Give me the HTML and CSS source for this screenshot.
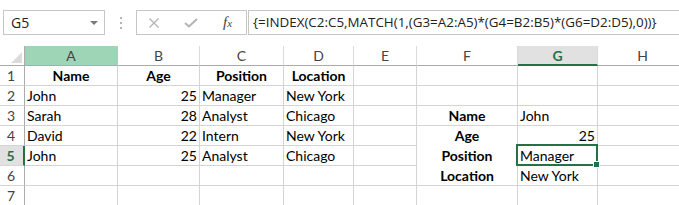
FILE: index.html
```html
<!DOCTYPE html>
<html lang="en">
    <head>
        <meta charset="UTF-8">
        <title>Sheet</title>
        <link rel="stylesheet" href="styles.css">
    </head>
    <body>
        <div class="toolbar">
            <div class="namebox">
                <span>G5</span>
                <span class="caret"></span>
            </div>
            <div class="grip"><i></i><i></i><i></i></div>
            <div class="fxbuttons">
                <svg class="icon-x" width="10" height="10" viewBox="0 0 10 10">
                    <path d="M0.5 0.5 L9.5 9.5 M9.5 0.5 L0.5 9.5" stroke="#b3b3b3" stroke-width="1.3" fill="none"/>
                </svg>
                <svg class="icon-ok" width="14" height="10" viewBox="0 0 14 10">
                    <path d="M1 5 L5 8.5 L13 1" stroke="#b3b3b3" stroke-width="2" fill="none"/>
                </svg>
                <span class="fx">f<small>x</small></span>
            </div>
            <div class="formula">{=INDEX(C2:C5,MATCH(1,(G3=A2:A5)*(G4=B2:B5)*(G6=D2:D5),0))}</div>
        </div>

        <div class="sheet">
            <div class="row head">
                <div class="rh corner"><span class="tri"></span></div>
                <div class="ch ca hl-a">A</div>
                <div class="ch cb">B</div>
                <div class="ch cc">C</div>
                <div class="ch cd">D</div>
                <div class="ch ce">E</div>
                <div class="ch cf">F</div>
                <div class="ch cg hl-g">G</div>
                <div class="ch chh">H</div>
            </div>
            <div class="row">
                <div class="rh">1</div>
                <div class="c ca b center">Name</div>
                <div class="c cb b center">Age</div>
                <div class="c cc b center">Position</div>
                <div class="c cd b center">Location</div>
                <div class="c ce"></div>
                <div class="c cf"></div>
                <div class="c cg"></div>
                <div class="c chh"></div>
            </div>
            <div class="row">
                <div class="rh">2</div>
                <div class="c ca">John</div>
                <div class="c cb num">25</div>
                <div class="c cc">Manager</div>
                <div class="c cd">New York</div>
                <div class="c ce"></div>
                <div class="c cf"></div>
                <div class="c cg"></div>
                <div class="c chh"></div>
            </div>
            <div class="row">
                <div class="rh">3</div>
                <div class="c ca">Sarah</div>
                <div class="c cb num">28</div>
                <div class="c cc">Analyst</div>
                <div class="c cd">Chicago</div>
                <div class="c ce"></div>
                <div class="c cf b center">Name</div>
                <div class="c cg">John</div>
                <div class="c chh"></div>
            </div>
            <div class="row">
                <div class="rh">4</div>
                <div class="c ca">David</div>
                <div class="c cb num">22</div>
                <div class="c cc">Intern</div>
                <div class="c cd">New York</div>
                <div class="c ce"></div>
                <div class="c cf b center nob">Age</div>
                <div class="c cg num">25</div>
                <div class="c chh"></div>
            </div>
            <div class="row">
                <div class="rh hl-r">5</div>
                <div class="c ca">John</div>
                <div class="c cb num">25</div>
                <div class="c cc">Analyst</div>
                <div class="c cd">Chicago</div>
                <div class="c ce"></div>
                <div class="c cf b center nob">Position</div>
                <div class="c cg active">Manager<span class="sel"><span class="handle"></span></span></div>
                <div class="c chh"></div>
            </div>
            <div class="row">
                <div class="rh">6</div>
                <div class="c ca"></div>
                <div class="c cb"></div>
                <div class="c cc"></div>
                <div class="c cd"></div>
                <div class="c ce"></div>
                <div class="c cf b center">Location</div>
                <div class="c cg">New York</div>
                <div class="c chh"></div>
            </div>
            <div class="row">
                <div class="rh">7</div>
                <div class="c ca"></div>
                <div class="c cb"></div>
                <div class="c cc"></div>
                <div class="c cd"></div>
                <div class="c ce"></div>
                <div class="c cf"></div>
                <div class="c cg"></div>
                <div class="c chh"></div>
            </div>
        </div>
    </body>
</html>
```

FILE: styles.css
```css
body {
    margin: 0;
    background: #fff;
    width: 679px;
    height: 205px;
    overflow: hidden;
}

/* formula bar */
.toolbar {
    display: flex;
    align-items: flex-start;
    height: 46px;
    padding-top: 10px;
    box-sizing: border-box;
    font-family: "Open Sans", "Noto Sans", sans-serif;
    color: #222;
}

.namebox {
    width: 102px;
    height: 25px;
    margin-left: 3px;
    box-sizing: border-box;
    border: 1px solid #c6c6c6;
    display: flex;
    align-items: center;
    justify-content: space-between;
    padding: 0 6px 0 7px;
    font-size: 14px;
}

.caret {
    width: 0;
    height: 0;
    border-left: 4px solid transparent;
    border-right: 4px solid transparent;
    border-top: 4px solid #7a7a7a;
}

.grip {
    width: 31px;
    height: 25px;
    display: flex;
    flex-direction: column;
    align-items: center;
    justify-content: center;
    gap: 3px;
}

.grip i {
    width: 2px;
    height: 2px;
    background: #b5b5b5;
}

.fxbuttons {
    width: 111px;
    height: 25px;
    box-sizing: border-box;
    border: 1px solid #c6c6c6;
    display: flex;
    align-items: center;
    padding-left: 12px;
}

.icon-x {
    margin-right: 25px;
}

.icon-ok {
    margin-top: 1px;
    margin-right: 25px;
}

.fx {
    font-family: "Liberation Serif", serif;
    font-style: italic;
    font-size: 15px;
    color: #444;
    margin-top: -1px;
}

.fx small {
    font-size: 11px;
}

.formula {
    flex: 1;
    height: 25px;
    margin-left: 1px;
    box-sizing: border-box;
    border: 1px solid #c6c6c6;
    border-right: none;
    padding-left: 4px;
    font-size: 13.4px;
    line-height: 22px;
    white-space: nowrap;
    overflow: hidden;
}

/* grid */
.sheet {
    font-family: Lato, "Liberation Sans", sans-serif;
    font-size: 14px;
    color: #000;
}

.row {
    display: flex;
    height: 20px;
}

.row > div {
    box-sizing: border-box;
    height: 20px;
    flex-shrink: 0;
    line-height: 19px;
    white-space: nowrap;
}

.rh {
    width: 25px;
    border-right: 1px solid #ababab;
    border-bottom: 1px solid #d4d4d4;
    text-align: center;
    color: #444;
    padding-right: 2px;
}

.ch {
    border-right: 1px solid #dadada;
    border-bottom: 1px solid #ababab;
    text-align: center;
    color: #444;
}

.head .rh {
    border-bottom-color: #ababab;
}

.corner {
    position: relative;
}

.tri {
    position: absolute;
    right: 2px;
    bottom: 2px;
    width: 0;
    height: 0;
    border-left: 11px solid transparent;
    border-bottom: 11px solid #dcdcdc;
}

.c {
    border-right: 1px solid #d4d4d4;
    border-bottom: 1px solid #d4d4d4;
    padding: 0 2px;
}

.ca { width: 93px; }
.cb { width: 82px; }
.cc { width: 84px; }
.cd { width: 70px; }
.ce { width: 63px; }
.cf { width: 101px; }
.cg { width: 80px; }
.chh { width: 90px; }

.b {
    font-weight: bold;
}

.center {
    text-align: center;
}

.num {
    text-align: right;
}

.nob {
    border-bottom-color: #fff;
}

.hl-a {
    background: #9fd5b7;
    border-right-color: #9fd5b7;
}

.hl-g {
    background: #e1e1e1;
    border-bottom: 2px solid #217346;
    color: #217346;
    font-weight: bold;
}

.hl-r {
    background: #e1e1e1;
    border-right: 2px solid #217346;
    color: #217346;
    font-weight: bold;
}

.active {
    position: relative;
}

.sel {
    position: absolute;
    left: -2px;
    top: -2px;
    width: 82px;
    height: 22px;
    box-sizing: border-box;
    border: 2px solid #217346;
}

.handle {
    position: absolute;
    right: -4px;
    bottom: -4px;
    width: 5px;
    height: 5px;
    background: #217346;
    border: 1px solid #fff;
}
```
